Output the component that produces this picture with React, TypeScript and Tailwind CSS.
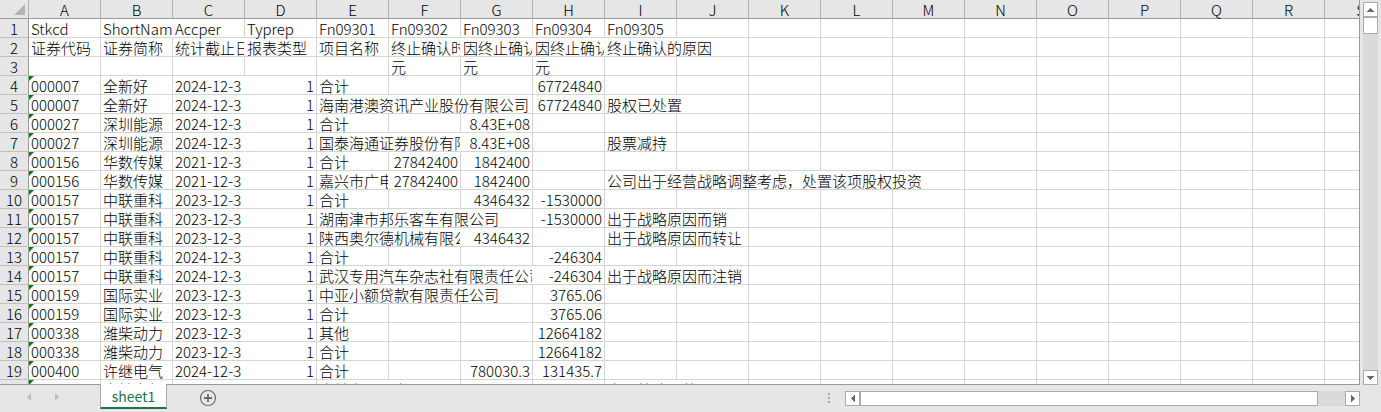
import { clsx } from "clsx"

// ── Data ──────────────────────────────────────────────────────────────────────

const COLUMNS = "ABCDEFGHIJKLMNOPQRS".split("")

type Row = Partial<Record<string, string | number>>

const ROWS: Row[] = [
  { A: "Stkcd", B: "ShortName", C: "Accper", D: "Typrep", E: "Fn09301", F: "Fn09302", G: "Fn09303", H: "Fn09304", I: "Fn09305" },
  { A: "证券代码", B: "证券简称", C: "统计截止日", D: "报表类型", E: "项目名称", F: "终止确认时", G: "因终止确认", H: "因终止确认", I: "终止确认的原因" },
  { F: "元", G: "元", H: "元" },
  { A: "000007", B: "全新好", C: "2024-12-3", D: 1, E: "合计", H: 67724840 },
  { A: "000007", B: "全新好", C: "2024-12-3", D: 1, E: "海南港澳资讯产业股份有限公司", H: 67724840, I: "股权已处置" },
  { A: "000027", B: "深圳能源", C: "2024-12-3", D: 1, E: "合计", G: 8.43e8 },
  { A: "000027", B: "深圳能源", C: "2024-12-3", D: 1, E: "国泰海通证券股份有限", G: 8.43e8, I: "股票减持" },
  { A: "000156", B: "华数传媒", C: "2021-12-3", D: 1, E: "合计", F: 27842400, G: 1842400 },
  { A: "000156", B: "华数传媒", C: "2021-12-3", D: 1, E: "嘉兴市广电", F: 27842400, G: 1842400, I: "公司出于经营战略调整考虑，处置该项股权投资" },
  { A: "000157", B: "中联重科", C: "2023-12-3", D: 1, E: "合计", G: 4346432, H: -1530000 },
  { A: "000157", B: "中联重科", C: "2023-12-3", D: 1, E: "湖南津市邦乐客车有限公司", H: -1530000, I: "出于战略原因而销" },
  { A: "000157", B: "中联重科", C: "2023-12-3", D: 1, E: "陕西奥尔德机械有限公", G: 4346432, I: "出于战略原因而转让" },
  { A: "000157", B: "中联重科", C: "2024-12-3", D: 1, E: "合计", H: -246304 },
  { A: "000157", B: "中联重科", C: "2024-12-3", D: 1, E: "武汉专用汽车杂志社有限责任公司", H: -246304, I: "出于战略原因而注销" },
  { A: "000159", B: "国际实业", C: "2023-12-3", D: 1, E: "中亚小额贷款有限责任公司", H: 3765.06 },
  { A: "000159", B: "国际实业", C: "2023-12-3", D: 1, E: "合计", H: 3765.06 },
  { A: "000338", B: "潍柴动力", C: "2023-12-3", D: 1, E: "其他", H: 12664182 },
  { A: "000338", B: "潍柴动力", C: "2023-12-3", D: 1, E: "合计", H: 12664182 },
  { A: "000400", B: "许继电气", C: "2024-12-3", D: 1, E: "合计", G: 780030.3, H: 131435.7 },
  { A: "000400", B: "许继电气", C: "2024-12-3", D: 1, E: "许继变压器有限公司", I: "出于战略调整" },
]

// ── Helpers ───────────────────────────────────────────────────────────────────

const COLUMN_WIDTH = 72

function formatValue(value: string | number) {
  if (typeof value === "string") return value
  if (value >= 1e8) {
    const [base, exp] = value.toExponential(2).split("e+")
    return `${base}E+${exp.padStart(2, "0")}`
  }
  return String(value)
}

/** Rough width: 15px for a Chinese character, 8px for a Latin one */
function textWidth(text: string) {
  return [...text].reduce((sum, ch) => sum + (ch > "\u007f" ? 15 : 8), 4)
}

type Cell = { column: string; value?: string | number; span: number; cut: boolean }

/** Long text runs over the empty cells to its right, or is cut at the next full one */
function toCells(row: Row): Cell[] {
  const cells: Cell[] = []
  for (let i = 0; i < COLUMNS.length; ) {
    const value = row[COLUMNS[i]]
    const needed = typeof value === "string" ? Math.ceil(textWidth(value) / COLUMN_WIDTH) : 1
    let span = 1
    while (span < needed && row[COLUMNS[i + span]] === undefined) span++
    cells.push({ column: COLUMNS[i], value, span, cut: span < needed })
    i += span
  }
  return cells
}

// ── Grid ──────────────────────────────────────────────────────────────────────

function Sheet() {
  return (
    <table className="w-full table-fixed border-separate border-spacing-0 bg-white text-[15px]">
      <colgroup>
        <col className="w-[29px]" />
        {COLUMNS.map((c) => (
          <col key={c} className="w-[72px]" />
        ))}
      </colgroup>
      <thead>
        <tr className="bg-[#e6e6e6]">
          <th className="h-[19px] border-r border-b border-r-[#b1b1b1] border-b-[#999] p-0">
            <button type="button" aria-label="Select all" className="ml-auto block pr-[3px]">
              <svg className="block size-[11px]" viewBox="0 0 11 11" aria-hidden="true">
                <path d="M11 0v11H0z" fill="#b4b4b4" />
              </svg>
            </button>
          </th>
          {COLUMNS.map((c) => (
            <th
              key={c}
              scope="col"
              className="h-[19px] border-r border-b border-r-[#b1b1b1] border-b-[#999] p-0 font-light">
              <div className="h-[18px] leading-5">{c}</div>
            </th>
          ))}
        </tr>
      </thead>
      <tbody>
        {ROWS.map((row, i) => (
          <tr key={i}>
            <th
              scope="row"
              className="h-[19px] border-r border-b border-r-[#999] border-b-[#c0c0c0] bg-[#e6e6e6] p-0 font-light">
              <div className="h-[18px] leading-5">{i + 1}</div>
            </th>
            {toCells(row).map(({ column, value, span, cut }) => (
              <td
                key={column}
                colSpan={span}
                className={clsx(
                  "relative h-[19px] border-r border-b border-b-[#d4d4d4] p-0",
                  cut ? "border-r-white" : "border-r-[#d4d4d4]"
                )}>
                {/* Number stored as text */}
                {column === "A" && i > 2 && (
                  <svg className="absolute top-0 left-0 size-[5px]" viewBox="0 0 5 5" aria-hidden="true">
                    <path d="M0 0h5L0 5z" fill="#008000" />
                  </svg>
                )}
                {value !== undefined && (
                  <div
                    className={clsx(
                      "h-[18px] overflow-x-clip whitespace-nowrap pl-0.5 leading-5",
                      typeof value === "number" && "pr-0.5 text-right"
                    )}>
                    {formatValue(value)}
                  </div>
                )}
              </td>
            ))}
          </tr>
        ))}
      </tbody>
    </table>
  )
}

// ── Scroll bars ───────────────────────────────────────────────────────────────

const ARROWS = {
  up: "M4 0h1v1h1v1h1v1h1v1H1V3h1V2h1V1h1z",
  down: "M1 0h7v1H7v1H6v1H5v1H4V3H3V2H2V1H1z",
  left: "M4 1v7H3V7H2V6H1V5H0V4h1V3h1V2h1V1z",
  right: "M0 1v7h1V7h1V6h1V5h1V4H3V3H2V2H1V1z",
}

function ArrowButton({ dir, className }: { dir: keyof typeof ARROWS; className: string }) {
  const upright = dir === "up" || dir === "down"
  return (
    <button
      type="button"
      aria-label={`Scroll ${dir}`}
      className={clsx("flex shrink-0 items-center justify-center border border-[#ababab] bg-white", className)}>
      <svg
        className={upright ? "h-1 w-[9px]" : "h-[9px] w-1"}
        viewBox={upright ? "0 0 9 4" : "0 0 4 9"}
        aria-hidden="true">
        <path d={ARROWS[dir]} fill="#6a6a6a" />
      </svg>
    </button>
  )
}

function VerticalScroll() {
  return (
    <div className="flex w-[15px] flex-col bg-[#dadada]">
      <ArrowButton dir="up" className="h-[15px]" />
      <div className="h-[17px] border border-[#ababab] bg-white" />
      <ArrowButton dir="down" className="mt-auto h-[15px]" />
    </div>
  )
}

function HorizontalScroll() {
  return (
    <div className="flex h-[15px] w-[515px] bg-[#dadada]">
      <ArrowButton dir="left" className="w-[15px]" />
      <div className="w-[458px] border border-[#ababab] bg-white" />
      <ArrowButton dir="right" className="ml-auto w-[15px]" />
    </div>
  )
}

// ── Tab bar ───────────────────────────────────────────────────────────────────

function TabBar() {
  return (
    <footer className="flex h-[27px] shrink-0 items-start pr-[21px]">
      <div className="flex w-[100px] shrink-0 gap-6 pt-2 pl-[27px]">
        <button type="button" aria-label="Previous sheet">
          <svg className="h-2 w-1" viewBox="0 0 4 8" aria-hidden="true">
            <path d="M4 0v8L0 4z" fill="#bcbcbc" />
          </svg>
        </button>
        <button type="button" aria-label="Next sheet">
          <svg className="h-2 w-1" viewBox="0 0 4 8" aria-hidden="true">
            <path d="M0 0v8l4-4z" fill="#bcbcbc" />
          </svg>
        </button>
      </div>
      <button
        type="button"
        className="z-10 -mt-px h-[25px] w-[67px] shrink-0 border-x border-b-2 border-x-[#ababab] border-b-[#217346] bg-white text-sm font-normal text-[#217346]">
        sheet1
      </button>
      <button type="button" aria-label="New sheet" className="mt-1 ml-8 shrink-0">
        <svg className="block size-[18px]" viewBox="0 0 18 18" fill="none" stroke="#6a6a6a" aria-hidden="true">
          <circle cx="9" cy="9" r="7.5" strokeWidth="1.2" />
          <path d="M9 5v8M5 9h8" strokeWidth="1.8" />
        </svg>
      </button>
      <div className="mt-2 mr-[15px] ml-auto flex flex-col gap-0.5" aria-hidden="true">
        <span className="size-0.5 bg-[#ababab]" />
        <span className="size-0.5 bg-[#ababab]" />
        <span className="size-0.5 bg-[#ababab]" />
      </div>
      <div className="mt-1.5">
        <HorizontalScroll />
      </div>
    </footer>
  )
}

export default function App() {
  return (
    <div className="flex h-screen flex-col overflow-hidden bg-[#e6e6e6] font-['Noto_Sans_CJK_SC',sans-serif] font-light text-black">
      <div className="flex min-h-0 flex-1">
        <main className="min-w-0 flex-1 overflow-hidden border-r border-b border-[#999]">
          <Sheet />
        </main>
        <div className="flex w-[21px] shrink-0 pt-0.5 pl-[3px]">
          <VerticalScroll />
        </div>
      </div>
      <TabBar />
    </div>
  )
}
